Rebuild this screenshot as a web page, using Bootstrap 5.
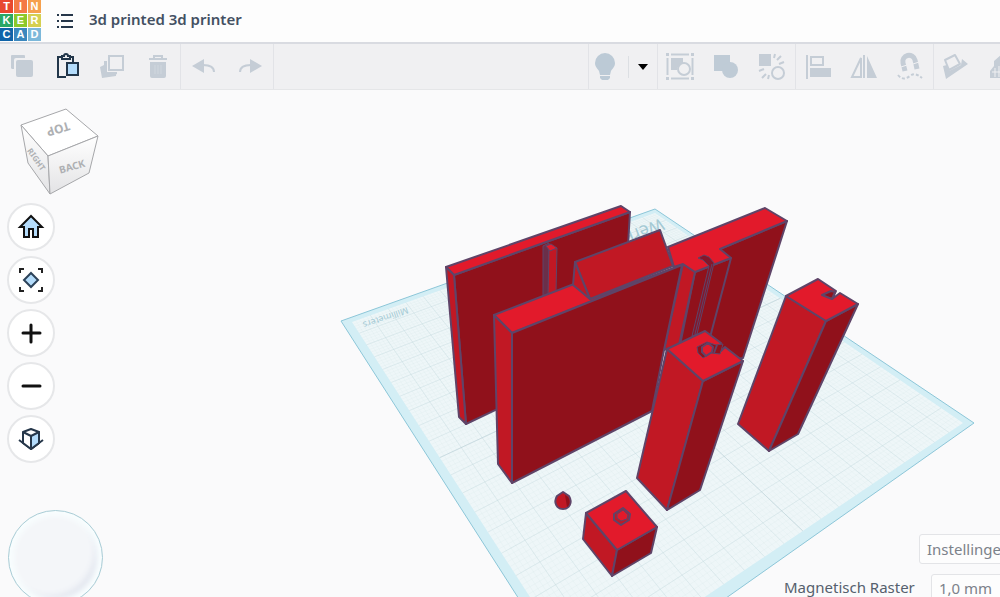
<!DOCTYPE html>
<html lang="nl">
<head>
<meta charset="utf-8">
<meta name="viewport" content="width=device-width, initial-scale=1">
<title>3d printed 3d printer</title>
<link href="https://cdn.jsdelivr.net/npm/bootstrap@5.3.0/dist/css/bootstrap.min.css" rel="stylesheet">
<style>
  body { font-family: "Noto Sans", "Open Sans", sans-serif; font-size: 16px; line-height: 24px; background: #fafafb; color: #3f4b59; }
  .topbar { height: 44px; background: #fdfdfd; border-bottom: 2px solid #d9dbe1; }
  .tk-logo { display: grid; grid-template: repeat(3, 13px) / repeat(3, 13px); gap: 1px; align-self: flex-start; text-decoration: none; }
  .tk-logo span { color: #fff; font-family: "Liberation Sans", sans-serif; font-size: 11px; line-height: 13px; font-weight: 700; text-align: center; }
  .menu-btn { width: 48px; height: 42px; }
  .doc-title { font-size: 15px; line-height: 20px; font-weight: 600; color: #435062; margin: 0 0 4px; }
  .toolbar { height: 46px; background: #f0f0f2; border-bottom: 1px solid #e5e6e8; }
  .tool { width: 45px; height: 46px; color: #c5cdd6; }
  .tool svg, .round svg, .menu-btn svg { display: block; flex: none; }
  .tool-end .tool, .tool-history .tool { width: 46px; }
  .group-rule { border-right: 1px solid #e2e3e7; }
  .tool-end { flex: 0 0 412px; border-left: 1px solid #e2e3e7; }
  .tool-end > div { margin-left: -1px; }
  .tool-end .tool-bulb { width: 34px; }
  .tool-end .tool-caret { width: 28px; }
  .thin-rule { width: 1px; height: 22px; background: #dcdfe3; margin-left: 6px; }
  .scene { inset: 0; z-index: 0; }
  .side { z-index: 1; width: 110px; }
  .round { width: 48px; height: 48px; margin-left: 7px; border: 2px solid #e6e7e9; background: #fff; color: #111; }
  .round-list { gap: 5px; }
  .orbit { width: 95px; height: 95px; margin: 47px 0 0 8px; border: 1px solid #a9cdd6; background: #f4f6f9; box-shadow: inset 0 0 5px 5px #f8fdfe, inset -7px -8px 6px #e2e6ef; }
  .snap { z-index: 1; width: 216px; margin-bottom: -7px; gap: 10px; }
  .snap-btn { width: 110px; height: 30px; margin-left: 135px; padding: 0 7px; font-size: 15px; line-height: 24px; text-align: left; color: #7c828a; background: #fdfdfd; border: 1px solid #e3e4e7; border-radius: 3px; }
  .snap label { width: 137px; font-size: 15px; line-height: 20px; color: #55606d; white-space: nowrap; padding-bottom: 4px; }
  .snap .form-select { width: 100px; height: 30px; margin-left: 10px; padding: 0 24px 2px 7px; font-size: 15px; color: #7c828a; background-color: #fdfdfd; border: 1px solid #e3e4e7; border-radius: 3px; }
  .edge { stroke: #5f4468; stroke-width: 2; stroke-linejoin: round; }
  .lit { fill: #e21a2b; }
  .mid { fill: #c11824; }
  .dim { fill: #90111b; }
</style>
</head>
<body class="vh-100 d-flex flex-column overflow-hidden">

<header class="topbar d-flex align-items-center flex-shrink-0">
  <a href="#" class="tk-logo" aria-label="Tinkercad">
    <span style="background:#e8472f">T</span><span style="background:#f47a45">I</span><span style="background:#f6a04d">N</span>
    <span style="background:#2aa766">K</span><span style="background:#8cc92a">E</span><span style="background:#d5cf50">R</span>
    <span style="background:#0f63a8">C</span><span style="background:#3b87be">A</span><span style="background:#7cb8da">D</span>
  </a>
  <button type="button" class="menu-btn btn p-0 border-0 d-flex align-items-center justify-content-center" aria-label="Ontwerpen">
    <svg width="18" height="16" viewBox="0 0 18 16" stroke="#26374a" stroke-width="2"><path d="M5 2h12M5 8h12M5 14h12M1 2h2M1 8h2M1 14h2"/></svg>
  </button>
  <h1 class="doc-title">3d printed 3d printer</h1>
</header>

<nav class="toolbar d-flex flex-shrink-0 overflow-hidden" aria-label="Gereedschap">
  <div class="d-flex group-rule">
    <button type="button" class="tool btn p-0 border-0 d-flex align-items-center justify-content-center" aria-label="Kopiëren">
      <svg width="30" height="30" viewBox="0 0 30 30" fill="currentColor"><path d="M4 3h12a1 1 0 0 1 1 1v2H8a2 2 0 0 0-2 2v9H4a2 2 0 0 1-1-1V4a1 1 0 0 1 1-1z"/><rect x="8" y="8" width="17" height="17" rx="2"/></svg>
    </button>
    <button type="button" class="tool btn p-0 border-0 d-flex align-items-center justify-content-center" aria-label="Plakken">
      <svg width="30" height="30" viewBox="0 0 30 30" fill="none" stroke="#22364a" stroke-width="2"><path d="M9 5H5v20h8M16 5h4v5M9 4h2a2 2 0 0 1 4 0h2v3H9z"/><rect x="14" y="11" width="11" height="12" fill="#b4dcfb"/></svg>
    </button>
    <button type="button" class="tool btn p-0 border-0 d-flex align-items-center justify-content-center" aria-label="Dupliceren">
      <svg width="30" height="30" viewBox="0 0 30 30" fill="currentColor"><path d="M11 4h14v14H11z" fill="none" stroke="currentColor" stroke-width="2"/><path d="M6 9h3v11h10v2l-2 1H6z"/><path d="M2 15l4-2v8l12 1v2L4 26z"/></svg>
    </button>
    <button type="button" class="tool btn p-0 border-0 d-flex align-items-center justify-content-center" aria-label="Verwijderen">
      <svg width="30" height="30" viewBox="0 0 30 30" fill="currentColor"><path d="M7 10h16v14a2 2 0 0 1-2 2H9a2 2 0 0 1-2-2zM6 6h18v2H6z"/><path d="M11 6V4h8v2" fill="none" stroke="currentColor" stroke-width="2"/><path d="M12 13v9M15 13v9M18 13v9" stroke="#d0d7de"/></svg>
    </button>
  </div>
  <div class="tool-history d-flex group-rule">
    <button type="button" class="tool btn p-0 border-0 d-flex align-items-center justify-content-center" aria-label="Ongedaan maken">
      <svg width="30" height="30" viewBox="0 0 30 30" fill="currentColor"><path d="M3 14l12-7v14z"/><path d="M14 13c7 0 11 2 11 7" fill="none" stroke="currentColor" stroke-width="2"/></svg>
    </button>
    <button type="button" class="tool btn p-0 border-0 d-flex align-items-center justify-content-center" aria-label="Opnieuw">
      <svg width="30" height="30" viewBox="0 0 30 30" fill="currentColor"><path d="M27 14L15 7v14z"/><path d="M16 13c-7 0-11 2-11 7" fill="none" stroke="currentColor" stroke-width="2"/></svg>
    </button>
  </div>

  <div class="tool-end d-flex ms-auto overflow-hidden">
    <div class="d-flex align-items-center group-rule flex-shrink-0">
      <button type="button" class="tool tool-bulb btn p-0 border-0 d-flex align-items-center justify-content-center" aria-label="Zichtbaarheid">
        <svg width="30" height="30" viewBox="0 0 30 30" fill="#bccad6"><path d="M15 1a10 10 0 0 1 10 10c0 4-3 6-4 8l-1 4H10l-1-4c-1-2-4-4-4-8A10 10 0 0 1 15 1zM10 24h10v2l-2 2h-6l-2-2z"/></svg>
      </button>
      <span class="thin-rule"></span>
      <button type="button" class="tool tool-caret btn p-0 border-0 d-flex align-items-center justify-content-center" aria-label="Meer">
        <svg width="10" height="6" viewBox="0 0 10 6"><path d="M0 0h10L5 6z" fill="#000"/></svg>
      </button>
    </div>
    <div class="d-flex group-rule flex-shrink-0">
      <button type="button" class="tool btn p-0 border-0 d-flex align-items-center justify-content-center" aria-label="Bundelen">
        <svg width="30" height="30" viewBox="0 0 30 30" fill="currentColor"><path d="M6 2.500h18M6 26.500h18M2.500 6v17M27.500 6v17" stroke="currentColor" stroke-width="2"/><path d="M1 1h3v3H1zM26 1h3v3h-3zM1 25h3v3H1zM26 25h3v3h-3zM6 6h12v5a8 8 0 0 0-6 7H6z"/><circle cx="19" cy="17" r="6" fill="none" stroke="currentColor" stroke-width="2"/></svg>
      </button>
      <button type="button" class="tool btn p-0 border-0 d-flex align-items-center justify-content-center" aria-label="Groeperen">
        <svg width="30" height="30" viewBox="0 0 30 30" fill="#bfcbd6"><path d="M3 3h16v16H3z"/><circle cx="19" cy="18" r="8"/></svg>
      </button>
      <button type="button" class="tool btn p-0 border-0 d-flex align-items-center justify-content-center" aria-label="Degroeperen">
        <svg width="30" height="30" viewBox="0 0 30 30" fill="currentColor"><path d="M2 2h12v12H2z"/><circle cx="21" cy="21" r="6" fill="none" stroke="currentColor" stroke-width="2"/><path d="M17 6l1-4M20 8l4-4M22 12l5-2M2 19l5-2M5 26l4-4M11 27l1-4" stroke="currentColor" stroke-width="2"/></svg>
      </button>
    </div>
    <div class="d-flex group-rule flex-shrink-0">
      <button type="button" class="tool btn p-0 border-0 d-flex align-items-center justify-content-center" aria-label="Uitlijnen">
        <svg width="30" height="30" viewBox="0 0 30 30" fill="currentColor"><path d="M3 3h2v24H3z"/><rect x="8" y="5" width="12" height="8" fill="none" stroke="currentColor" stroke-width="2"/><path d="M7 16h21v9H7z"/></svg>
      </button>
      <button type="button" class="tool btn p-0 border-0 d-flex align-items-center justify-content-center" aria-label="Spiegelen">
        <svg width="30" height="30" viewBox="0 0 30 30" fill="currentColor"><path d="M12 6v19H3z" fill="none" stroke="currentColor" stroke-width="2"/><path d="M18 4l10 22H18zM14 3h2v23h-2z"/></svg>
      </button>
      <button type="button" class="tool btn p-0 border-0 d-flex align-items-center justify-content-center" aria-label="Magneet">
        <svg width="30" height="30" viewBox="0 0 30 30" fill="none" stroke="currentColor"><path d="M10 19L8 11a6 6 0 0 1 12-3l2 9" stroke-width="5"/><path d="M6 15l6-2M18 12l6-2" stroke="#f0f0f2" stroke-width="1"/><path d="M3 23c4 5 8 4 12 1s7-2 12 2" stroke-width="2" stroke-dasharray="3 2"/></svg>
      </button>
    </div>
    <div class="d-flex flex-shrink-0">
      <button type="button" class="tool btn p-0 border-0 d-flex align-items-center justify-content-center" aria-label="Werkvlak">
        <svg width="30" height="30" viewBox="0 0 30 30" fill="currentColor"><path d="M2 14l4-1 2 6 12-6 1-6 6 5L5 27z"/><path d="M4 8l10-5 5 9-11 6z" fill="#f0f0f2" stroke="currentColor" stroke-width="2" stroke-linejoin="round"/></svg>
      </button>
      <button type="button" class="tool btn p-0 border-0 d-flex align-items-center justify-content-center" aria-label="Liniaal">
        <svg width="30" height="30" viewBox="0 0 30 30" fill="currentColor"><path d="M7 9l7-6v10h8v13H3v-7l4-5z"/><path d="M5 20h18M8 16v9M12 14v11" stroke="#f0f0f2"/></svg>
      </button>
    </div>
  </div>
</nav>

<main class="position-relative flex-grow-1 d-flex justify-content-between overflow-hidden">
  <svg class="scene position-absolute w-100 h-100" viewBox="0 90 1000 507" preserveAspectRatio="xMidYMid slice" role="img" aria-label="3D-werkvlak">
    <path d="M341 321L655 209 974 423 583 699z" fill="#d3eef5" stroke="#8cc6d8"/>
    <path d="M352 322L655 213 963 423 583 679z" fill="#eef6f8"/>
    <path id="fineGrid" fill="none" stroke="#c9dde2" stroke-width="1" opacity=".12"/>
    <path id="mainGrid" fill="none" stroke="#bdd3d9" stroke-width="1" opacity=".3"/>
    <path id="boldGrid" fill="none" stroke="#b3cad2" stroke-width="1" opacity=".4"/>
    <g fill="#a3c9d4" font-family="Noto Sans">
      <text transform="translate(407 307) rotate(161)" font-size="9">Millimeters</text>
      <text transform="translate(661 218) rotate(158)" font-size="17">Werkvlak</text>
    </g>

    <g class="edge">
      <path class="dim" d="M454 275L630 212 628 245 600 360 466 424z"/>
      <path class="lit" d="M446 267L621 206 630 212 454 275z"/>
      <path class="mid" d="M446 267L454 275 466 424 459 417z"/>
      <path d="M543 246L549 243V296L543 298z" fill="#6b2f49" stroke-width="1"/>
      <path class="mid" d="M549 250L557 248 556 293 548 296z" stroke-width="1"/>
      <path class="lit" d="M546 246L551 244 557 248 550 251z" stroke-width="1"/>

      <path class="dim" d="M720 249L787 221 743 358 700 365 690 330z"/>
      <path class="dim" d="M695 272L731 258 708 345 680 345z"/>
      <path class="mid" d="M683 264L695 272 679 345 664 350z"/>
      <path class="lit" d="M668 247L765 208 787 221 720 249 731 258 695 272 683 264 674 267z"/>
      <path d="M698 258L704 255 709 257 714 263 697 334 692 336 709 266 703 260z" fill="#85162a" stroke-width="1"/>
      <path d="M712 264L695 334" fill="none" stroke-width="1"/>

      <path class="lit" d="M494 315L574 284 590 299 682 265 512 333z"/>
      <path class="dim" d="M512 333L682 265 664 350 652 411 512 483z"/>
      <path class="mid" d="M494 315L512 333 512 483 498 464z"/>
      <path class="mid" d="M575 262L660 230 673 266 590 299z"/>
      <path class="mid" d="M575 262L573 285 590 299z"/>

      <path class="mid" d="M667 349L703 381 667 510 637 478z"/>
      <path class="dim" d="M703 381L743 361 700 490 667 510z"/>
      <path class="lit" d="M667 349L705 331 721 343 717 350 721 351 725 347 743 361 703 381z"/>
      <path class="dim" d="M697 347L707 342 716 345 723 344 720 354 711 353 703 358 698 353z" stroke-width="1"/>
      <path class="lit" d="M702 347L708 343 713 347 712 352 706 356 702 352z"/>
      <path d="M717 345L714 353" fill="none"/>

      <path class="mid" d="M786 296L826 321 769 451 738 424z"/>
      <path class="dim" d="M826 321L858 304 798 434 769 451z"/>
      <path class="lit" d="M786 296L818 279 836 291 832 299 840 293 858 304 826 321z"/>
      <path class="dim" d="M822 295L831 291 835 292 832 299z"/>

      <path class="mid" d="M586 513L617 550 612 576 583 539z"/>
      <path class="dim" d="M617 550L657 527 651 553 612 576z"/>
      <path class="lit" d="M586 513L626 491 657 527 617 550z"/>
      <path class="mid" d="M614 514L623 508 630 514 629 520 621 525 614 520z"/>
      <path class="lit" d="M617 514L623 510 628 515 627 519 621 521 617 518z" stroke-width="1"/>

      <path class="mid" d="M563 492L569 496C573 503 569 509 563 509S553 503 557 496z"/>
    </g>
    <path d="M565 495L568 497C571 502 569 506 567 507z" class="dim"/>
  </svg>

  <aside class="side position-relative d-flex flex-column flex-shrink-0">
    <svg class="flex-shrink-0" width="110" height="113" viewBox="0 90 110 113" role="img" aria-label="Weergavekubus">
      <defs><linearGradient id="cubeShade" x1="0" y1="0" x2="0" y2="1"><stop offset="0" stop-color="#fff"/><stop offset="1" stop-color="#e3e3e5"/></linearGradient></defs>
      <g stroke="#a6a7aa" stroke-linejoin="round">
        <path d="M21 125L66 109 98 136 48 156z" fill="#fff"/>
        <path d="M21 125L48 156 50 194 28 163z" fill="url(#cubeShade)"/>
        <path d="M48 156L98 136 89 173 50 194z" fill="url(#cubeShade)"/>
      </g>
      <g fill="#aeb0b3" font-family="Noto Sans" font-weight="700" text-anchor="middle">
        <text transform="translate(57 125) rotate(163)" font-size="12">TOP</text>
        <text transform="translate(73 170) rotate(-16)" font-size="10">BACK</text>
        <text transform="translate(34 161) rotate(55)" font-size="8">RIGHT</text>
      </g>
    </svg>
    <div class="round-list d-flex flex-column">
      <button type="button" class="round btn rounded-circle p-0 d-flex align-items-center justify-content-center" aria-label="Beginweergave">
        <svg width="28" height="28" viewBox="0 0 28 28" fill="#b4dcfb" stroke="#111" stroke-width="2"><path d="M14 3L3 14h4v10h5v-8h4v8h5V14h4z"/></svg>
      </button>
      <button type="button" class="round btn rounded-circle p-0 d-flex align-items-center justify-content-center" aria-label="Passend maken">
        <svg width="28" height="28" viewBox="0 0 28 28" fill="none" stroke="#222" stroke-width="2"><path d="M3 7V3h4M21 3h4v4M25 21v4h-4M7 25H3v-4"/><path d="M14 7l7 7-7 7-7-7z" fill="#b4dcfb" stroke="#2c4259"/></svg>
      </button>
      <button type="button" class="round btn rounded-circle p-0 d-flex align-items-center justify-content-center" aria-label="Inzoomen">
        <svg width="28" height="28" viewBox="0 0 28 28" stroke="#111" stroke-width="3" stroke-linecap="round"><path d="M6 14h17M14 6v17"/></svg>
      </button>
      <button type="button" class="round btn rounded-circle p-0 d-flex align-items-center justify-content-center" aria-label="Uitzoomen">
        <svg width="28" height="28" viewBox="0 0 28 28" stroke="#111" stroke-width="3" stroke-linecap="round"><path d="M6 14h17"/></svg>
      </button>
      <button type="button" class="round btn rounded-circle p-0 d-flex align-items-center justify-content-center" aria-label="Orthografisch">
        <svg width="28" height="28" viewBox="0 0 28 28" fill="#fff" stroke="#26374a" stroke-width="2" stroke-linejoin="round"><path d="M2 15l12 9 12-9" fill="none"/><path d="M14 4l8 3v11l-8 6-8-6V7z"/><path d="M14 11l8-4v11l-8 6z" fill="#b4dcfb"/><path d="M6 7l8 4v12" fill="none"/></svg>
      </button>
    </div>
    <div class="orbit rounded-circle flex-shrink-0"></div>
  </aside>

  <section class="snap position-relative d-flex flex-column align-self-end flex-shrink-0">
    <button type="button" class="snap-btn">Instellingen</button>
    <div class="d-flex align-items-center">
      <label for="snapGrid" class="flex-shrink-0">Magnetisch Raster</label>
      <select id="snapGrid" class="form-select flex-shrink-0"><option>1,0 mm</option><option>0,5 mm</option></select>
    </div>
  </section>
</main>

<script src="https://cdn.jsdelivr.net/npm/bootstrap@5.3.0/dist/js/bootstrap.bundle.min.js"></script>
<script>
  // Perspective mapping from the unit square to the work plane's four corners.
  const [p0, p1, p2, p3] = [[352, 322], [655, 213], [963, 423], [583, 679]];
  const d1 = [p1[0] - p2[0], p1[1] - p2[1]], d2 = [p3[0] - p2[0], p3[1] - p2[1]];
  const s = [p0[0] - p1[0] + p2[0] - p3[0], p0[1] - p1[1] + p2[1] - p3[1]];
  const det = d1[0] * d2[1] - d2[0] * d1[1];
  const g = (s[0] * d2[1] - d2[0] * s[1]) / det, h = (d1[0] * s[1] - s[0] * d1[1]) / det;
  const at = (u, v) => [0, 1].map(i =>
    (((p1[i] - p0[i] + g * p1[i]) * u + (p3[i] - p0[i] + h * p3[i]) * v + p0[i]) / (g * u + h * v + 1)).toFixed(1));
  const lines = n => Array.from({ length: n - 1 }, (_, k) => (k + 1) / n)
    .map(t => `M${at(t, 0)}L${at(t, 1)}M${at(0, t)}L${at(1, t)}`).join('');
  document.getElementById('boldGrid').setAttribute('d', lines(2));
  document.getElementById('mainGrid').setAttribute('d', lines(20));
  document.getElementById('fineGrid').setAttribute('d', lines(100));
</script>
</body>
</html>
